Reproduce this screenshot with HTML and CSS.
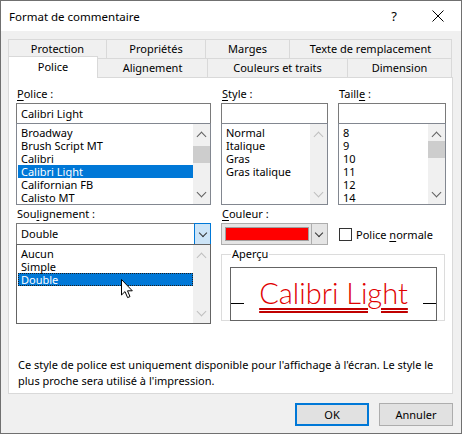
FILE: index.html
```html
<!DOCTYPE html>
<html lang="fr">
<head>
  <meta charset="UTF-8">
  <title>Format de commentaire</title>
  <link rel="stylesheet" href="styles.css">
</head>
<body>
  <div class="window">
    <!-- Title bar -->
    <div class="titlebar">
      <span class="title">Format de commentaire</span>
      <span class="help">?</span>
      <span class="close">
        <svg width="12" height="12" viewBox="0 0 12 12"><path d="M0.5 0.5 L11.5 11.5 M11.5 0.5 L0.5 11.5" stroke="#000" stroke-width="1" fill="none"/></svg>
      </span>
    </div>

    <div class="content">
      <!-- Tabs -->
      <div class="tabs">
        <div class="tab-row back">
          <div class="tab w-protection">Protection</div>
          <div class="tab w-proprietes">Propriétés</div>
          <div class="tab w-marges">Marges</div>
          <div class="tab w-texte">Texte de remplacement</div>
        </div>
        <div class="tab-row front">
          <div class="tab w-police active">Police</div>
          <div class="tab w-alignement">Alignement</div>
          <div class="tab w-couleurs">Couleurs et traits</div>
          <div class="tab w-dimension">Dimension</div>
        </div>
      </div>

      <!-- Tab panel -->
      <div class="panel">
        <div class="row top-row">
          <div class="col col-font">
            <div class="label"><u>P</u>olice :</div>
            <div class="textbox">Calibri Light</div>
            <div class="listbox">
              <div class="items">
                <div class="item">Broadway</div>
                <div class="item">Brush Script MT</div>
                <div class="item">Calibri</div>
                <div class="item selected">Calibri Light</div>
                <div class="item">Californian FB</div>
                <div class="item">Calisto MT</div>
              </div>
              <div class="scrollbar">
                <span class="arrow up"></span>
                <span class="thumb font-thumb"></span>
                <span class="arrow down"></span>
              </div>
            </div>
          </div>

          <div class="col col-style">
            <div class="label"><u>S</u>tyle :</div>
            <div class="textbox"></div>
            <div class="listbox">
              <div class="items">
                <div class="item">Normal</div>
                <div class="item">Italique</div>
                <div class="item">Gras</div>
                <div class="item">Gras italique</div>
              </div>
              <div class="scrollbar disabled">
                <span class="arrow up"></span>
                <span class="arrow down"></span>
              </div>
            </div>
          </div>

          <div class="col col-size">
            <div class="label">Taill<u>e</u> :</div>
            <div class="textbox"></div>
            <div class="listbox">
              <div class="items">
                <div class="item">8</div>
                <div class="item">9</div>
                <div class="item">10</div>
                <div class="item">11</div>
                <div class="item">12</div>
                <div class="item">14</div>
              </div>
              <div class="scrollbar">
                <span class="arrow up"></span>
                <span class="thumb size-thumb"></span>
                <span class="arrow down"></span>
              </div>
            </div>
          </div>
        </div>

        <div class="row bottom-row">
          <div class="col col-font">
            <div class="label">Sou<u>l</u>ignement :</div>
            <div class="combo">
              <span class="combo-text">Double</span>
              <span class="combo-btn hot"></span>
            </div>
            <div class="listbox droplist">
              <div class="items">
                <div class="item">Aucun</div>
                <div class="item">Simple</div>
                <div class="item selected focus">Double</div>
              </div>
              <div class="scrollbar disabled">
                <span class="arrow up"></span>
                <span class="arrow down"></span>
              </div>
              <svg class="cursor" width="13" height="20" viewBox="0 0 13 20">
                <path d="M0.5 0.5 L0.5 16 L4 12.6 L6.6 18.6 L9 17.6 L6.5 11.8 L11.3 11.8 Z" fill="#fff" stroke="#000" stroke-width="1" stroke-linejoin="miter"/>
              </svg>
            </div>
          </div>

          <div class="col col-right">
            <div class="color-row">
              <div class="color-col">
                <div class="label"><u>C</u>ouleur :</div>
                <div class="combo color-combo">
                  <span class="swatch"></span>
                  <span class="combo-btn gray"></span>
                </div>
              </div>
              <label class="check">
                <span class="box"></span>
                <span>Police <u>n</u>ormale</span>
              </label>
            </div>

            <fieldset class="preview">
              <legend>Aperçu</legend>
              <div class="sample">
                <span class="base-line"></span>
                <span class="sample-text">Calibri Light</span>
                <span class="base-line"></span>
              </div>
            </fieldset>
          </div>
        </div>

        <p class="note">Ce style de police est uniquement disponible pour l'affichage à l'écran. Le style le plus proche sera utilisé à l'impression.</p>
      </div>

      <!-- Buttons -->
      <div class="buttons">
        <button class="btn default">OK</button>
        <button class="btn">Annuler</button>
      </div>
    </div>
  </div>
</body>
</html>
```

FILE: styles.css
```css
* {
  box-sizing: border-box;
}

body {
  margin: 0;
  font-family: "Noto Sans", "Open Sans", sans-serif;
  font-size: 11px;
  color: #000;
  background: #fff;
}

u {
  text-decoration-thickness: 1px;
  text-underline-offset: 2px;
}

.window {
  width: 462px;
  height: 434px;
  border: 1px solid #707070;
  background: #f0f0f0;
  display: flex;
  flex-direction: column;
}

/* Title bar */
.titlebar {
  height: 30px;
  background: #fff;
  display: flex;
  align-items: center;
  padding-left: 8px;
}

.title {
  flex: 1;
  font-size: 11.5px;
}

.help {
  width: 20px;
  font-size: 13px;
  margin-right: 28px;
  text-align: center;
}

.close {
  width: 12px;
  height: 12px;
  margin-right: 17px;
  display: flex;
}

.content {
  flex: 1;
  padding: 8px 8px 0 7px;
  display: flex;
  flex-direction: column;
}

/* Tabs */
.tabs {
  display: flex;
  flex-direction: column;
}

.tab-row {
  display: flex;
  height: 19px;
}

.tab {
  border: 1px solid #d9d9d9;
  border-bottom: none;
  margin-right: -1px;
  text-align: center;
  line-height: 17px;
  background: #f0f0f0;
}

.tab-row .tab:last-child {
  margin-right: 0;
}

.w-protection { width: 99px; }
.w-proprietes { width: 100px; }
.w-marges { width: 85px; }
.w-texte { width: 163px; }
.w-police { width: 90px; }
.w-alignement { width: 111px; }
.w-couleurs { width: 141px; }
.w-dimension { width: 105px; }

.tab.active {
  background: #fff;
  margin-top: -2px;
  height: 22px;
  position: relative;
  z-index: 2;
  line-height: 20px;
}

/* Panel */
.panel {
  background: #fff;
  border: 1px solid #d9d9d9;
  height: 317px;
  padding: 8px 0 0 7px;
  display: flex;
  flex-direction: column;
}

.row {
  display: flex;
}

.col-font { width: 195px; margin-right: 10px; }
.col-style { width: 107px; margin-right: 10px; }
.col-size { width: 108px; }

.label {
  height: 17px;
  line-height: 16px;
  margin-left: 1px;
}

.textbox {
  height: 21px;
  border: 1px solid #7a7a7a;
  padding: 0 4px;
  line-height: 19px;
}

.listbox {
  position: relative;
  height: 82px;
  margin-top: -1px;
  border: 1px solid #828790;
  display: flex;
}

.items {
  flex: 1;
  padding: 2px 0 0 1px;
}

.item {
  height: 13px;
  line-height: 13px;
  padding-left: 3px;
  white-space: nowrap;
}

.item.selected {
  background: #0078d7;
  color: #fff;
}

.item.focus {
  outline: 1px dotted #1f1f1f;
  outline-offset: -1px;
}

.scrollbar {
  width: 17px;
  background: #f0f0f0;
  position: relative;
}

.arrow {
  position: absolute;
  left: 5px;
  width: 7px;
  height: 7px;
  border-left: 1.5px solid #606060;
  border-top: 1.5px solid #606060;
}

.arrow.up {
  top: 9px;
  transform: rotate(45deg);
}

.arrow.down {
  bottom: 8px;
  transform: rotate(225deg);
}

.scrollbar.disabled .arrow {
  border-color: #bfbfbf;
}

.thumb {
  position: absolute;
  left: 0;
  width: 17px;
  background: #cdcdcd;
}

.font-thumb { top: 22px; height: 17px; }
.size-thumb { top: 17px; height: 17px; }

/* Bottom row */
.bottom-row {
  margin-top: 1px;
}

.combo {
  height: 22px;
  border: 1px solid #7a7a7a;
  display: flex;
}

.combo-text {
  flex: 1;
  padding-left: 4px;
  line-height: 20px;
}

.combo-btn {
  width: 17px;
  position: relative;
}

.combo-btn::after {
  content: "";
  position: absolute;
  left: 5px;
  top: 5px;
  width: 5px;
  height: 5px;
  border-right: 1px solid #333;
  border-bottom: 1px solid #333;
  transform: rotate(45deg);
}

.combo-btn.hot {
  background: #cce4f7;
  border: 1px solid #0078d7;
  margin: -1px -1px -1px 0;
  width: 17px;
}

.combo-btn.hot::after {
  left: 5px;
  top: 6px;
}

.droplist {
  height: 80px;
  margin-top: -1px;
  border-color: #646464;
}

.cursor {
  position: absolute;
  left: 104px;
  top: 34px;
}

.col-right {
  width: 225px;
  display: flex;
  flex-direction: column;
}

.color-row {
  display: flex;
  align-items: flex-end;
}

.color-col {
  width: 107px;
  margin-right: 10px;
}

.color-combo {
  border-color: #adadad;
  background: #e5e5e5;
  padding: 3px 0 3px 3px;
  height: 22px;
}

.swatch {
  width: 87px;
  background: #ff0000;
  border: 1px solid #a0a0a0;
}

.color-combo .combo-btn {
  margin: -3px 0 -3px 2px;
  width: 16px;
  border-left: 1px solid #adadad;
}

.color-combo .combo-btn::after {
  top: 6px;
  left: 4px;
}

.check {
  display: flex;
  align-items: center;
  height: 22px;
  gap: 4px;
  margin-left: 1px;
}

.box {
  width: 13px;
  height: 13px;
  border: 1px solid #333;
  background: #fff;
}

.preview {
  margin: 3px 0 0 0;
  padding: 7px 7px 4px 8px;
  border: 1px solid #dcdcdc;
  height: 73px;
  width: 224px;
}

.preview legend {
  padding: 0 1px;
  margin-left: 1px;
  font-size: 11px;
  line-height: 12px;
}

.sample {
  height: 54px;
  border: 1px solid #646464;
  display: flex;
  align-items: flex-end;
  justify-content: space-between;
  padding: 0 0 15px 0;
}

.base-line {
  width: 13px;
  border-top: 1px solid #000;
  margin-bottom: 1px;
}

.sample-text {
  font-family: "Lato", "Open Sans", sans-serif;
  font-weight: 300;
  font-size: 29px;
  line-height: 24px;
  color: #e00000;
  text-decoration: underline double #c00000;
  text-decoration-thickness: 2px;
  text-underline-offset: 4px;
}

.note {
  margin: 33px 0 0 2px;
  line-height: 16px;
  width: 430px;
}

/* Buttons */
.buttons {
  display: flex;
  justify-content: flex-end;
  gap: 10px;
  padding: 9px 0 0 0;
}

.btn {
  width: 74px;
  height: 23px;
  font-family: inherit;
  font-size: 11px;
  background: #e1e1e1;
  border: 1px solid #adadad;
  padding: 0;
}

.btn.default {
  border: 2px solid #0078d7;
}
```
